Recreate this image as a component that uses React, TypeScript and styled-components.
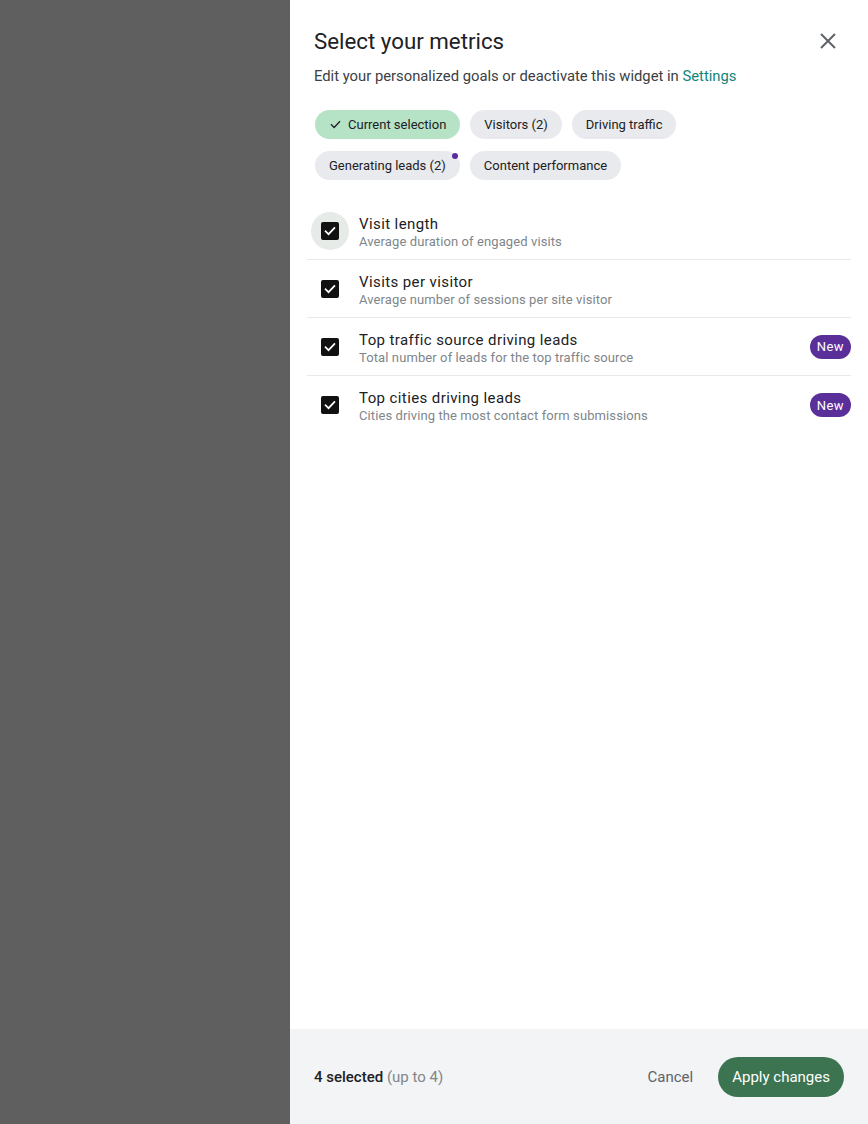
import styled, { createGlobalStyle } from "styled-components";

const GlobalStyle = createGlobalStyle`
  html, body {
    margin: 0;
    padding: 0;
    font-family: Roboto, "Noto Sans", "Liberation Sans", sans-serif;
    color: #202124;
  }
  * { box-sizing: border-box; }
`;

const chips = [
  { label: "Current selection", active: true },
  { label: "Visitors (2)" },
  { label: "Driving traffic" },
  { label: "Generating leads (2)", dot: true },
  { label: "Content performance" },
];

const metrics = [
  { title: "Visit length", desc: "Average duration of engaged visits", focus: true },
  { title: "Visits per visitor", desc: "Average number of sessions per site visitor" },
  { title: "Top traffic source driving leads", desc: "Total number of leads for the top traffic source", isNew: true },
  { title: "Top cities driving leads", desc: "Cities driving the most contact form submissions", isNew: true },
];

const CheckIcon = ({ size = 14, color = "#fff", weight = 3 }: { size?: number; color?: string; weight?: number }) => (
  <svg width={size} height={size} viewBox="0 0 24 24" fill="none">
    <path d="M4.5 12.5l5 5L19.5 7" stroke={color} strokeWidth={weight} strokeLinecap="square" />
  </svg>
);

export default function App() {
  return (
    <>
      <GlobalStyle />
      <Screen>
        <Backdrop />
        <Panel>
          <Body>
            <Header>
              <Title>Select your metrics</Title>
              <CloseButton aria-label="Close">
                <svg width="18" height="18" viewBox="0 0 18 18">
                  <path d="M2 2l14 14M16 2L2 16" stroke="#5f6368" strokeWidth="2" />
                </svg>
              </CloseButton>
            </Header>
            <Subtitle>
              Edit your personalized goals or deactivate this widget in <Link>Settings</Link>
            </Subtitle>

            <Chips>
              {chips.map((c) => (
                <Chip key={c.label} $active={c.active}>
                  {c.active && <CheckIcon size={13} color="#202124" weight={2.4} />}
                  {c.label}
                  {c.dot && <Dot />}
                </Chip>
              ))}
            </Chips>

            <List>
              {metrics.map((m) => (
                <Row key={m.title}>
                  <BoxWrap $focus={m.focus}>
                    <Box>
                      <CheckIcon />
                    </Box>
                  </BoxWrap>
                  <RowText>
                    <RowTitle>{m.title}</RowTitle>
                    <RowDesc>{m.desc}</RowDesc>
                  </RowText>
                  {m.isNew && <Badge>New</Badge>}
                </Row>
              ))}
            </List>
          </Body>

          <Footer>
            <Count>
              <strong>4 selected</strong> <span>(up to 4)</span>
            </Count>
            <Actions>
              <TextButton>Cancel</TextButton>
              <PrimaryButton>Apply changes</PrimaryButton>
            </Actions>
          </Footer>
        </Panel>
      </Screen>
    </>
  );
}

const Screen = styled.div`
  display: flex;
  width: 868px;
  height: 1124px;
`;

const Backdrop = styled.div`
  width: 290px;
  flex-shrink: 0;
  background: #5f5f5f;
`;

const Panel = styled.div`
  flex: 1;
  display: flex;
  flex-direction: column;
  background: #fff;
`;

const Body = styled.div`
  flex: 1;
  padding: 25px 17px 0;
`;

const Header = styled.div`
  display: flex;
  align-items: center;
  justify-content: space-between;
  padding: 0 7px;
`;

const Title = styled.h1`
  margin: 0;
  font-size: 22.3px;
  line-height: 32px;
  font-weight: 400;
  color: #202124;
`;

const CloseButton = styled.button`
  border: 0;
  background: none;
  padding: 0;
  width: 20px;
  height: 20px;
  display: flex;
  align-items: center;
  justify-content: center;
  margin-right: 6px;
  cursor: pointer;
`;

const Subtitle = styled.p`
  margin: 9px 0 0;
  padding: 0 7px;
  font-size: 14.8px;
  line-height: 20px;
  color: #3c4043;
`;

const Link = styled.a`
  color: #12857a;
  cursor: pointer;
`;

const Chips = styled.div`
  display: flex;
  flex-wrap: wrap;
  gap: 12px 10px;
  margin-top: 24px;
  padding: 0 8px;
  width: 440px;
`;

const Chip = styled.span<{ $active?: boolean }>`
  position: relative;
  display: inline-flex;
  align-items: center;
  gap: 6px;
  height: 29px;
  padding: 0 14px;
  border-radius: 15px;
  font-size: 13px;
  font-weight: 400;
  color: #202124;
  background: ${(p) => (p.$active ? "#b6e3c6" : "#e8eaed")};
`;

const Dot = styled.span`
  position: absolute;
  top: 2px;
  right: 2px;
  width: 6px;
  height: 6px;
  border-radius: 50%;
  background: #5b2c9e;
`;

const List = styled.div`
  margin-top: 22px;
`;

const Row = styled.div`
  display: flex;
  align-items: center;
  height: 58px;
  padding: 0 0 0 4px;
  border-bottom: 1px solid #e8eaed;

  &:last-child {
    border-bottom: 0;
  }
`;

const BoxWrap = styled.div<{ $focus?: boolean }>`
  width: 38px;
  height: 38px;
  border-radius: 50%;
  display: flex;
  align-items: center;
  justify-content: center;
  background: ${(p) => (p.$focus ? "#e6ebe8" : "transparent")};
  flex-shrink: 0;
`;

const Box = styled.span`
  width: 18px;
  height: 18px;
  border-radius: 2px;
  background: #111;
  display: flex;
  align-items: center;
  justify-content: center;
`;

const RowText = styled.div`
  flex: 1;
  margin-left: 10px;
  padding-top: 3px;
`;

const RowTitle = styled.div`
  font-size: 15px;
  line-height: 18px;
  font-weight: 400;
  letter-spacing: 0.4px;
  color: #202124;
`;

const RowDesc = styled.div`
  font-size: 13px;
  line-height: 17px;
  letter-spacing: 0.1px;
  color: #80868b;
`;

const Badge = styled.span`
  height: 24px;
  padding: 0 7px;
  border-radius: 12px;
  display: inline-flex;
  align-items: center;
  font-size: 13px;
  font-weight: 400;
  letter-spacing: 0.4px;
  color: #fff;
  background: #5b2f9a;
`;

const Footer = styled.div`
  height: 95px;
  flex-shrink: 0;
  background: #f3f4f6;
  display: flex;
  align-items: center;
  justify-content: space-between;
  padding: 0 24px;
`;

const Count = styled.div`
  font-size: 15px;
  color: #202124;

  strong {
    font-weight: 500;
  }

  span {
    color: #80868b;
  }
`;

const Actions = styled.div`
  display: flex;
  align-items: center;
  gap: 9px;
`;

const TextButton = styled.button`
  border: 0;
  background: none;
  height: 40px;
  padding: 0 16px;
  font-family: inherit;
  font-size: 15px;
  color: #5f6368;
  cursor: pointer;
`;

const PrimaryButton = styled.button`
  border: 0;
  height: 40px;
  padding: 0 14px;
  border-radius: 20px;
  background: #3c7452;
  color: #fff;
  font-family: inherit;
  font-size: 15px;
  cursor: pointer;
`;
